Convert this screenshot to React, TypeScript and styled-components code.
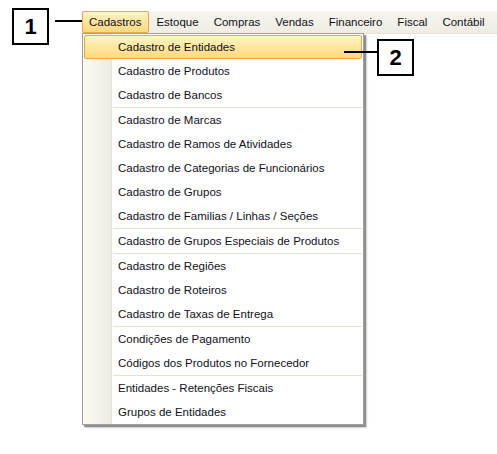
import styled, { createGlobalStyle } from "styled-components";

const GlobalStyle = createGlobalStyle`
  html, body {
    margin: 0;
    padding: 0;
    background: #ffffff;
  }
  body {
    font-family: "Liberation Sans", Arial, sans-serif;
  }
`;

type Entry = { label: string } | { separator: true };

const topMenus = [
  "Cadastros",
  "Estoque",
  "Compras",
  "Vendas",
  "Financeiro",
  "Fiscal",
  "Contábil",
];

const entries: Entry[] = [
  { label: "Cadastro de Entidades" },
  { label: "Cadastro de Produtos" },
  { label: "Cadastro de Bancos" },
  { separator: true },
  { label: "Cadastro de Marcas" },
  { label: "Cadastro de Ramos de Atividades" },
  { label: "Cadastro de Categorias de Funcionários" },
  { label: "Cadastro de Grupos" },
  { label: "Cadastro de Familias / Linhas / Seções" },
  { separator: true },
  { label: "Cadastro de Grupos Especiais de Produtos" },
  { separator: true },
  { label: "Cadastro de Regiões" },
  { label: "Cadastro de Roteiros" },
  { label: "Cadastro de Taxas de Entrega" },
  { separator: true },
  { label: "Condições de Pagamento" },
  { label: "Códigos dos Produtos no Fornecedor" },
  { separator: true },
  { label: "Entidades - Retenções Fiscais" },
  { label: "Grupos de Entidades" },
];

const App = () => {
  return (
    <>
      <GlobalStyle />
      <Page>
        <NumberBox>1</NumberBox>
        <Connector $width={27} />
        <MenuBar>
          {topMenus.map((name, i) => (
            <TopItem key={name} $active={i === 0}>
              {name}
            </TopItem>
          ))}
          <Dropdown>
            {entries.map((entry, i) =>
              "separator" in entry ? (
                <Separator key={i} />
              ) : (
                <MenuItem key={i} $active={i === 0}>
                  {entry.label}
                </MenuItem>
              )
            )}
            <Callout>
              <Connector $width={33} />
              <NumberBox>2</NumberBox>
            </Callout>
          </Dropdown>
        </MenuBar>
      </Page>
    </>
  );
};

export default App;

const Page = styled.div`
  display: flex;
  align-items: flex-start;
  padding: 8px 0 0 12px;
  height: 446px;
  box-sizing: border-box;
`;

const NumberBox = styled.div`
  width: 37px;
  height: 37px;
  box-sizing: border-box;
  border: 2px solid #000;
  background: #fff;
  display: flex;
  align-items: center;
  justify-content: center;
  font-family: "Liberation Sans", Arial, sans-serif;
  font-weight: bold;
  font-size: 22px;
  color: #000;
  flex-shrink: 0;
`;

const Connector = styled.div<{ $width: number }>`
  width: ${(p) => p.$width}px;
  height: 2px;
  background: #000;
  margin-top: 12px;
  margin-left: 6px;
  flex-shrink: 0;
`;

const MenuBar = styled.div`
  position: relative;
  flex: 1;
  display: flex;
  height: 22px;
  margin-top: 3px;
  background: linear-gradient(#f7f5ef, #efece3);
  border-bottom: 1px solid #e6e2d6;
`;

const TopItem = styled.div<{ $active: boolean }>`
  display: flex;
  align-items: center;
  padding: 0 7px 0 6px;
  font-size: 11.5px;
  color: #10101a;
  white-space: nowrap;
  box-sizing: border-box;
  border: 1px solid ${(p) => (p.$active ? "#e9a94a" : "transparent")};
  border-radius: 2px;
  background: ${(p) =>
    p.$active ? "linear-gradient(#fff4c0, #ffd77f)" : "transparent"};
`;

const Dropdown = styled.div`
  position: absolute;
  top: 22px;
  left: 0;
  width: 282px;
  box-sizing: border-box;
  padding: 1px 0 0;
  border: 1px solid #a3a09a;
  background: linear-gradient(
      to right,
      #fbfaf5 0,
      #eeebe0 28px,
      #e4e1d6 28px,
      #e4e1d6 29px,
      #ffffff 29px
    );
  box-shadow: 2px 2px 1px rgba(0, 0, 0, 0.35), 3px 3px 2px rgba(0, 0, 0, 0.15);
`;

const MenuItem = styled.div<{ $active: boolean }>`
  height: 24px;
  margin: 0 1px;
  padding-left: 33px;
  display: flex;
  align-items: center;
  box-sizing: border-box;
  font-size: 11.5px;
  color: #10101a;
  white-space: nowrap;
  border: 1px solid ${(p) => (p.$active ? "#eaa84b" : "transparent")};
  border-radius: 2px;
  background: ${(p) =>
    p.$active ? "linear-gradient(#fff5c2, #ffd97f)" : "transparent"};
`;

const Separator = styled.div`
  height: 1px;
  margin-left: 30px;
  margin-right: 1px;
  background: #e6e1d2;
`;

const Callout = styled.div`
  position: absolute;
  top: 5px;
  left: 255px;
  display: flex;
  align-items: flex-start;
`;
